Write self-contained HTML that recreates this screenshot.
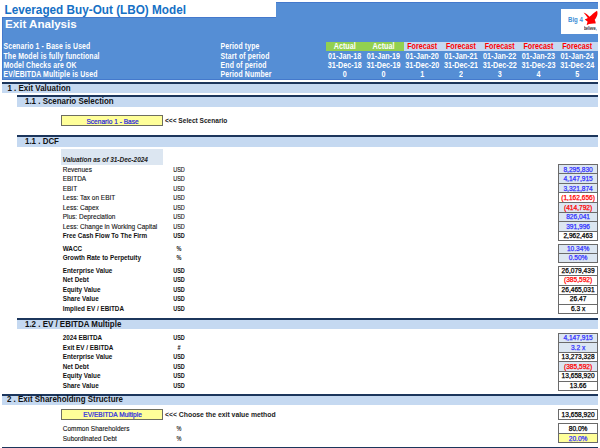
<!DOCTYPE html>
<html><head><meta charset="utf-8"><style>
html,body{margin:0;padding:0;background:#fff;}
#root{position:relative;width:600px;height:448px;overflow:hidden;background:#fff;font-family:"Liberation Sans", sans-serif;}
#root>div,#root>svg{position:absolute;}
</style></head><body><div id="root">
<div style="left:276px;top:2px;width:322px;height:15px;background:#558ed5;box-sizing:border-box;border-top:1px solid #4479cc;"></div>
<div style="left:2px;top:16.5px;width:596px;height:63.2px;background:#558ed5;box-sizing:border-box;border-left:1px solid #4479cc;border-bottom:1px solid #4479cc;"></div>
<div style="left:2px;top:16.5px;width:274px;height:1.0px;background:#4479cc;"></div>
<div style="top:5.38px;font-size:11.75px;color:#1570c5;font-weight:700;font-style:normal;line-height:10px;white-space:nowrap;left:4.5px;transform:scale(1.0,1.06);transform-origin:left 9.07px;">Leveraged Buy-Out (LBO) Model</div>
<div style="top:19.43px;font-size:11.6px;color:#fff;font-weight:700;font-style:normal;line-height:10px;white-space:nowrap;left:5px;">Exit Analysis</div>
<div style="left:560.5px;top:8.7px;width:37.299999999999955px;height:25.3px;background:#fff;"></div>
<div style="top:14.82px;font-size:7.6px;color:#3d8fd6;font-weight:700;font-style:normal;line-height:10px;white-space:nowrap;left:567.9px;transform:scale(0.8,1.0);transform-origin:left 7.63px;">Big 4</div>
<svg style="left:578px;top:6px" width="20" height="26" viewBox="0 0 20 26"><path d="M5.6 6.5 C8 7.5 10 9 11.5 10.8 C13.5 9 16 6.5 19 4.7 C19.9 6.5 19.9 10 16.7 13.8 C17.5 15.5 17.8 16.8 17.6 17.6 C15.5 17.3 13 17.5 11 18 C10 18.6 9.3 19 8.7 19 C9 17.5 9.5 16.5 9.5 15.5 C8.5 15 7.5 14 6.9 13.2 C8 13 9 12.6 9.8 12 C8.5 10 6.8 8 5.6 6.5 Z" fill="#f00"/></svg>
<div style="top:23.86px;font-size:4.6px;color:#222;font-weight:700;font-style:normal;line-height:10px;white-space:nowrap;left:583.8px;transform:scale(0.75,1.0);transform-origin:left 6.59px;">believe,</div>
<div style="top:42.06px;font-size:6.9px;color:#fff;font-weight:700;font-style:normal;line-height:10px;white-space:nowrap;letter-spacing:0.12px;left:3.5px;transform:scale(1.0,1.2);transform-origin:left 7.39px;">Scenario 1 - Base is Used</div>
<div style="top:42.06px;font-size:6.9px;color:#fff;font-weight:700;font-style:normal;line-height:10px;white-space:nowrap;letter-spacing:0.12px;left:220.6px;transform:scale(1.0,1.2);transform-origin:left 7.39px;">Period type</div>
<div style="top:52.06px;font-size:6.9px;color:#fff;font-weight:700;font-style:normal;line-height:10px;white-space:nowrap;letter-spacing:0.12px;left:3.5px;transform:scale(1.0,1.2);transform-origin:left 7.39px;">The Model is fully functional</div>
<div style="top:52.06px;font-size:6.9px;color:#fff;font-weight:700;font-style:normal;line-height:10px;white-space:nowrap;letter-spacing:0.12px;left:220.6px;transform:scale(1.0,1.2);transform-origin:left 7.39px;">Start of period</div>
<div style="top:61.06px;font-size:6.9px;color:#fff;font-weight:700;font-style:normal;line-height:10px;white-space:nowrap;letter-spacing:0.12px;left:3.5px;transform:scale(1.0,1.2);transform-origin:left 7.39px;">Model Checks are OK</div>
<div style="top:61.06px;font-size:6.9px;color:#fff;font-weight:700;font-style:normal;line-height:10px;white-space:nowrap;letter-spacing:0.12px;left:220.6px;transform:scale(1.0,1.2);transform-origin:left 7.39px;">End of period</div>
<div style="top:70.06px;font-size:6.9px;color:#fff;font-weight:700;font-style:normal;line-height:10px;white-space:nowrap;letter-spacing:0.12px;left:3.5px;transform:scale(1.0,1.2);transform-origin:left 7.39px;">EV/EBITDA Multiple is Used</div>
<div style="top:70.06px;font-size:6.9px;color:#fff;font-weight:700;font-style:normal;line-height:10px;white-space:nowrap;letter-spacing:0.12px;left:220.6px;transform:scale(1.0,1.2);transform-origin:left 7.39px;">Period Number</div>
<div style="left:326px;top:42px;width:77.5px;height:9px;background:#92d050;"></div>
<div style="left:403.5px;top:42px;width:194.5px;height:9px;background:#c6d9f1;"></div>
<div style="top:41.96px;font-size:7.2px;color:#fff;font-weight:700;font-style:normal;line-height:10px;white-space:nowrap;left:244.7px;width:200px;text-align:center;transform:scale(1.0,1.15);transform-origin:center 7.49px;">Actual</div>
<div style="top:51.96px;font-size:7.2px;color:#fff;font-weight:700;font-style:normal;line-height:10px;white-space:nowrap;left:244.7px;width:200px;text-align:center;transform:scale(1.0,1.15);transform-origin:center 7.49px;">01-Jan-18</div>
<div style="top:60.96px;font-size:7.2px;color:#fff;font-weight:700;font-style:normal;line-height:10px;white-space:nowrap;left:244.7px;width:200px;text-align:center;transform:scale(1.0,1.15);transform-origin:center 7.49px;">31-Dec-18</div>
<div style="top:69.96px;font-size:7.2px;color:#fff;font-weight:700;font-style:normal;line-height:10px;white-space:nowrap;left:244.7px;width:200px;text-align:center;transform:scale(1.0,1.15);transform-origin:center 7.49px;">0</div>
<div style="top:41.96px;font-size:7.2px;color:#fff;font-weight:700;font-style:normal;line-height:10px;white-space:nowrap;left:283.45px;width:200px;text-align:center;transform:scale(1.0,1.15);transform-origin:center 7.49px;">Actual</div>
<div style="top:51.96px;font-size:7.2px;color:#fff;font-weight:700;font-style:normal;line-height:10px;white-space:nowrap;left:283.45px;width:200px;text-align:center;transform:scale(1.0,1.15);transform-origin:center 7.49px;">01-Jan-19</div>
<div style="top:60.96px;font-size:7.2px;color:#fff;font-weight:700;font-style:normal;line-height:10px;white-space:nowrap;left:283.45px;width:200px;text-align:center;transform:scale(1.0,1.15);transform-origin:center 7.49px;">31-Dec-19</div>
<div style="top:69.96px;font-size:7.2px;color:#fff;font-weight:700;font-style:normal;line-height:10px;white-space:nowrap;left:283.45px;width:200px;text-align:center;transform:scale(1.0,1.15);transform-origin:center 7.49px;">0</div>
<div style="top:41.96px;font-size:7.2px;color:#ff0000;font-weight:700;font-style:normal;line-height:10px;white-space:nowrap;left:322.2px;width:200px;text-align:center;transform:scale(1.0,1.15);transform-origin:center 7.49px;">Forecast</div>
<div style="top:51.96px;font-size:7.2px;color:#fff;font-weight:700;font-style:normal;line-height:10px;white-space:nowrap;left:322.2px;width:200px;text-align:center;transform:scale(1.0,1.15);transform-origin:center 7.49px;">01-Jan-20</div>
<div style="top:60.96px;font-size:7.2px;color:#fff;font-weight:700;font-style:normal;line-height:10px;white-space:nowrap;left:322.2px;width:200px;text-align:center;transform:scale(1.0,1.15);transform-origin:center 7.49px;">31-Dec-20</div>
<div style="top:69.96px;font-size:7.2px;color:#fff;font-weight:700;font-style:normal;line-height:10px;white-space:nowrap;left:322.2px;width:200px;text-align:center;transform:scale(1.0,1.15);transform-origin:center 7.49px;">1</div>
<div style="top:41.96px;font-size:7.2px;color:#ff0000;font-weight:700;font-style:normal;line-height:10px;white-space:nowrap;left:360.95px;width:200px;text-align:center;transform:scale(1.0,1.15);transform-origin:center 7.49px;">Forecast</div>
<div style="top:51.96px;font-size:7.2px;color:#fff;font-weight:700;font-style:normal;line-height:10px;white-space:nowrap;left:360.95px;width:200px;text-align:center;transform:scale(1.0,1.15);transform-origin:center 7.49px;">01-Jan-21</div>
<div style="top:60.96px;font-size:7.2px;color:#fff;font-weight:700;font-style:normal;line-height:10px;white-space:nowrap;left:360.95px;width:200px;text-align:center;transform:scale(1.0,1.15);transform-origin:center 7.49px;">31-Dec-21</div>
<div style="top:69.96px;font-size:7.2px;color:#fff;font-weight:700;font-style:normal;line-height:10px;white-space:nowrap;left:360.95px;width:200px;text-align:center;transform:scale(1.0,1.15);transform-origin:center 7.49px;">2</div>
<div style="top:41.96px;font-size:7.2px;color:#ff0000;font-weight:700;font-style:normal;line-height:10px;white-space:nowrap;left:399.7px;width:200px;text-align:center;transform:scale(1.0,1.15);transform-origin:center 7.49px;">Forecast</div>
<div style="top:51.96px;font-size:7.2px;color:#fff;font-weight:700;font-style:normal;line-height:10px;white-space:nowrap;left:399.7px;width:200px;text-align:center;transform:scale(1.0,1.15);transform-origin:center 7.49px;">01-Jan-22</div>
<div style="top:60.96px;font-size:7.2px;color:#fff;font-weight:700;font-style:normal;line-height:10px;white-space:nowrap;left:399.7px;width:200px;text-align:center;transform:scale(1.0,1.15);transform-origin:center 7.49px;">31-Dec-22</div>
<div style="top:69.96px;font-size:7.2px;color:#fff;font-weight:700;font-style:normal;line-height:10px;white-space:nowrap;left:399.7px;width:200px;text-align:center;transform:scale(1.0,1.15);transform-origin:center 7.49px;">3</div>
<div style="top:41.96px;font-size:7.2px;color:#ff0000;font-weight:700;font-style:normal;line-height:10px;white-space:nowrap;left:438.45000000000005px;width:200px;text-align:center;transform:scale(1.0,1.15);transform-origin:center 7.49px;">Forecast</div>
<div style="top:51.96px;font-size:7.2px;color:#fff;font-weight:700;font-style:normal;line-height:10px;white-space:nowrap;left:438.45000000000005px;width:200px;text-align:center;transform:scale(1.0,1.15);transform-origin:center 7.49px;">01-Jan-23</div>
<div style="top:60.96px;font-size:7.2px;color:#fff;font-weight:700;font-style:normal;line-height:10px;white-space:nowrap;left:438.45000000000005px;width:200px;text-align:center;transform:scale(1.0,1.15);transform-origin:center 7.49px;">31-Dec-23</div>
<div style="top:69.96px;font-size:7.2px;color:#fff;font-weight:700;font-style:normal;line-height:10px;white-space:nowrap;left:438.45000000000005px;width:200px;text-align:center;transform:scale(1.0,1.15);transform-origin:center 7.49px;">4</div>
<div style="top:41.96px;font-size:7.2px;color:#ff0000;font-weight:700;font-style:normal;line-height:10px;white-space:nowrap;left:477.20000000000005px;width:200px;text-align:center;transform:scale(1.0,1.15);transform-origin:center 7.49px;">Forecast</div>
<div style="top:51.96px;font-size:7.2px;color:#fff;font-weight:700;font-style:normal;line-height:10px;white-space:nowrap;left:477.20000000000005px;width:200px;text-align:center;transform:scale(1.0,1.15);transform-origin:center 7.49px;">01-Jan-24</div>
<div style="top:60.96px;font-size:7.2px;color:#fff;font-weight:700;font-style:normal;line-height:10px;white-space:nowrap;left:477.20000000000005px;width:200px;text-align:center;transform:scale(1.0,1.15);transform-origin:center 7.49px;">31-Dec-24</div>
<div style="top:69.96px;font-size:7.2px;color:#fff;font-weight:700;font-style:normal;line-height:10px;white-space:nowrap;left:477.20000000000005px;width:200px;text-align:center;transform:scale(1.0,1.15);transform-origin:center 7.49px;">5</div>
<div style="left:2px;top:82px;width:596px;height:2px;background:#1c365c;"></div>
<div style="left:2px;top:84px;width:596px;height:8.799999999999997px;background:#c5d9f1;"></div>
<div style="top:83.70px;font-size:7.95px;color:#111;font-weight:700;font-style:normal;line-height:10px;white-space:nowrap;left:7.5px;transform:scale(1.0,1.14);transform-origin:left 7.75px;">1 . Exit Valuation</div>
<div style="left:17.2px;top:95.2px;width:580.8px;height:2.0px;background:#1c365c;"></div>
<div style="left:17.2px;top:97.2px;width:580.8px;height:9.5px;background:#c5d9f1;"></div>
<div style="top:96.70px;font-size:7.95px;color:#111;font-weight:700;font-style:normal;line-height:10px;white-space:nowrap;left:25px;transform:scale(1.0,1.14);transform-origin:left 7.75px;">1.1 . Scenario Selection</div>
<div style="left:17.2px;top:134.8px;width:580.8px;height:2.0px;background:#1c365c;"></div>
<div style="left:17.2px;top:136.8px;width:580.8px;height:10.0px;background:#c5d9f1;"></div>
<div style="top:136.70px;font-size:7.95px;color:#111;font-weight:700;font-style:normal;line-height:10px;white-space:nowrap;left:25px;transform:scale(1.0,1.14);transform-origin:left 7.75px;">1.1 . DCF</div>
<div style="left:17.2px;top:317.6px;width:580.8px;height:2.0px;background:#1c365c;"></div>
<div style="left:17.2px;top:319.6px;width:580.8px;height:9.199999999999989px;background:#c5d9f1;"></div>
<div style="top:319.70px;font-size:7.95px;color:#111;font-weight:700;font-style:normal;line-height:10px;white-space:nowrap;left:25px;transform:scale(1.0,1.14);transform-origin:left 7.75px;">1.2 . EV / EBITDA Multiple</div>
<div style="left:2px;top:393.5px;width:596px;height:2.0px;background:#1c365c;"></div>
<div style="left:2px;top:395.5px;width:596px;height:9.5px;background:#c5d9f1;"></div>
<div style="top:394.70px;font-size:7.95px;color:#111;font-weight:700;font-style:normal;line-height:10px;white-space:nowrap;left:7px;transform:scale(1.0,1.14);transform-origin:left 7.75px;">2 . Exit Shareholding Structure</div>
<div style="left:2px;top:446.6px;width:596px;height:1.3999999999999773px;background:#1c365c;"></div>
<div style="left:60.8px;top:115px;width:102.50000000000001px;height:11.299999999999997px;background:#ffff99;box-sizing:border-box;border:1px solid #6e6e60;"></div>
<div style="top:117.17px;font-size:6.58px;color:#2424e0;font-weight:400;font-style:normal;line-height:10px;white-space:nowrap;-webkit-text-stroke:0.2px #2424e0;left:12.599999999999994px;width:200px;text-align:center;transform:scale(1.0,1.14);transform-origin:center 7.28px;">Scenario 1 - Base</div>
<div style="top:116.17px;font-size:6.59px;color:#222;font-weight:700;font-style:normal;line-height:10px;white-space:nowrap;left:165px;">&lt;&lt;&lt; Select Scenario</div>
<div style="left:60.8px;top:408.5px;width:102.50000000000001px;height:11.0px;background:#ffff99;box-sizing:border-box;border:1px solid #6e6e60;"></div>
<div style="top:410.17px;font-size:6.58px;color:#2424e0;font-weight:400;font-style:normal;line-height:10px;white-space:nowrap;-webkit-text-stroke:0.2px #2424e0;left:12.599999999999994px;width:200px;text-align:center;transform:scale(1.0,1.14);transform-origin:center 7.28px;">EV/EBITDA Multiple</div>
<div style="top:410.08px;font-size:6.83px;color:#222;font-weight:700;font-style:normal;line-height:10px;white-space:nowrap;left:165px;">&lt;&lt;&lt; Choose the exit value method</div>
<div style="left:61px;top:149.3px;width:102.4px;height:15.299999999999983px;background:#dce6f1;"></div>
<div style="top:155.21px;font-size:6.47px;color:#222;font-weight:700;font-style:italic;line-height:10px;white-space:nowrap;left:62.6px;">Valuation as of 31-Dec-2024</div>
<div style="left:558.4px;top:164.0px;width:39.39999999999998px;height:9.599999999999994px;background:#dce6f1;"></div>
<div style="top:165.20px;font-size:6.5px;color:#111;font-weight:400;font-style:normal;line-height:10px;white-space:nowrap;-webkit-text-stroke:0.1px #111;left:62.7px;transform:scale(1.0,1.1);transform-origin:left 7.25px;">Revenues</div>
<div style="top:165.27px;font-size:6.3px;color:#111;font-weight:400;font-style:normal;line-height:10px;white-space:nowrap;-webkit-text-stroke:0.1px #111;left:78.6px;width:200px;text-align:center;transform:scale(0.88,1.1);transform-origin:center 7.18px;">USD</div>
<div style="top:165.16px;font-size:6.6px;color:#3333ff;font-weight:400;font-style:normal;line-height:10px;white-space:nowrap;-webkit-text-stroke:0.25px #3333ff;left:478.0999999999999px;width:200px;text-align:center;">8,295,830</div>
<div style="left:558.4px;top:173.6px;width:39.39999999999998px;height:9.599999999999994px;background:#dce6f1;"></div>
<div style="top:174.20px;font-size:6.5px;color:#111;font-weight:400;font-style:normal;line-height:10px;white-space:nowrap;-webkit-text-stroke:0.1px #111;left:62.7px;transform:scale(1.0,1.1);transform-origin:left 7.25px;">EBITDA</div>
<div style="top:174.27px;font-size:6.3px;color:#111;font-weight:400;font-style:normal;line-height:10px;white-space:nowrap;-webkit-text-stroke:0.1px #111;left:78.6px;width:200px;text-align:center;transform:scale(0.88,1.1);transform-origin:center 7.18px;">USD</div>
<div style="top:174.16px;font-size:6.6px;color:#3333ff;font-weight:400;font-style:normal;line-height:10px;white-space:nowrap;-webkit-text-stroke:0.25px #3333ff;left:478.0999999999999px;width:200px;text-align:center;">4,147,915</div>
<div style="left:558.4px;top:183.2px;width:39.39999999999998px;height:9.599999999999994px;background:#dce6f1;"></div>
<div style="top:184.20px;font-size:6.5px;color:#111;font-weight:400;font-style:normal;line-height:10px;white-space:nowrap;-webkit-text-stroke:0.1px #111;left:62.7px;transform:scale(1.0,1.1);transform-origin:left 7.25px;">EBIT</div>
<div style="top:184.27px;font-size:6.3px;color:#111;font-weight:400;font-style:normal;line-height:10px;white-space:nowrap;-webkit-text-stroke:0.1px #111;left:78.6px;width:200px;text-align:center;transform:scale(0.88,1.1);transform-origin:center 7.18px;">USD</div>
<div style="top:184.16px;font-size:6.6px;color:#3333ff;font-weight:400;font-style:normal;line-height:10px;white-space:nowrap;-webkit-text-stroke:0.25px #3333ff;left:478.0999999999999px;width:200px;text-align:center;">3,321,874</div>
<div style="left:558.4px;top:192.8px;width:39.39999999999998px;height:9.599999999999994px;background:#fff;"></div>
<div style="top:193.20px;font-size:6.5px;color:#111;font-weight:400;font-style:normal;line-height:10px;white-space:nowrap;-webkit-text-stroke:0.1px #111;left:62.7px;transform:scale(1.0,1.1);transform-origin:left 7.25px;">Less: Tax on EBIT</div>
<div style="top:193.27px;font-size:6.3px;color:#111;font-weight:400;font-style:normal;line-height:10px;white-space:nowrap;-webkit-text-stroke:0.1px #111;left:78.6px;width:200px;text-align:center;transform:scale(0.88,1.1);transform-origin:center 7.18px;">USD</div>
<div style="top:193.16px;font-size:6.6px;color:#ff0000;font-weight:400;font-style:normal;line-height:10px;white-space:nowrap;-webkit-text-stroke:0.25px #ff0000;left:478.0999999999999px;width:200px;text-align:center;">(1,162,656)</div>
<div style="left:558.4px;top:202.4px;width:39.39999999999998px;height:9.599999999999994px;background:#dce6f1;"></div>
<div style="top:203.20px;font-size:6.5px;color:#111;font-weight:400;font-style:normal;line-height:10px;white-space:nowrap;-webkit-text-stroke:0.1px #111;left:62.7px;transform:scale(1.0,1.1);transform-origin:left 7.25px;">Less: Capex</div>
<div style="top:203.27px;font-size:6.3px;color:#111;font-weight:400;font-style:normal;line-height:10px;white-space:nowrap;-webkit-text-stroke:0.1px #111;left:78.6px;width:200px;text-align:center;transform:scale(0.88,1.1);transform-origin:center 7.18px;">USD</div>
<div style="top:203.16px;font-size:6.6px;color:#ff0000;font-weight:400;font-style:normal;line-height:10px;white-space:nowrap;-webkit-text-stroke:0.25px #ff0000;left:478.0999999999999px;width:200px;text-align:center;">(414,792)</div>
<div style="left:558.4px;top:212.0px;width:39.39999999999998px;height:9.599999999999994px;background:#dce6f1;"></div>
<div style="top:212.20px;font-size:6.5px;color:#111;font-weight:400;font-style:normal;line-height:10px;white-space:nowrap;-webkit-text-stroke:0.1px #111;left:62.7px;transform:scale(1.0,1.1);transform-origin:left 7.25px;">Plus: Depreciation</div>
<div style="top:212.27px;font-size:6.3px;color:#111;font-weight:400;font-style:normal;line-height:10px;white-space:nowrap;-webkit-text-stroke:0.1px #111;left:78.6px;width:200px;text-align:center;transform:scale(0.88,1.1);transform-origin:center 7.18px;">USD</div>
<div style="top:212.16px;font-size:6.6px;color:#3333ff;font-weight:400;font-style:normal;line-height:10px;white-space:nowrap;-webkit-text-stroke:0.25px #3333ff;left:478.0999999999999px;width:200px;text-align:center;">826,041</div>
<div style="left:558.4px;top:221.6px;width:39.39999999999998px;height:9.599999999999994px;background:#dce6f1;"></div>
<div style="top:222.20px;font-size:6.5px;color:#111;font-weight:400;font-style:normal;line-height:10px;white-space:nowrap;-webkit-text-stroke:0.1px #111;left:62.7px;transform:scale(1.0,1.1);transform-origin:left 7.25px;">Less: Change in Working Capital</div>
<div style="top:222.27px;font-size:6.3px;color:#111;font-weight:400;font-style:normal;line-height:10px;white-space:nowrap;-webkit-text-stroke:0.1px #111;left:78.6px;width:200px;text-align:center;transform:scale(0.88,1.1);transform-origin:center 7.18px;">USD</div>
<div style="top:222.16px;font-size:6.6px;color:#3333ff;font-weight:400;font-style:normal;line-height:10px;white-space:nowrap;-webkit-text-stroke:0.25px #3333ff;left:478.0999999999999px;width:200px;text-align:center;">391,996</div>
<div style="left:558.4px;top:231.2px;width:39.39999999999998px;height:9.599999999999994px;background:#fff;"></div>
<div style="top:231.25px;font-size:6.35px;color:#111;font-weight:700;font-style:normal;line-height:10px;white-space:nowrap;left:62.7px;transform:scale(1.0,1.1);transform-origin:left 7.20px;">Free Cash Flow To The Firm</div>
<div style="top:231.27px;font-size:6.3px;color:#111;font-weight:700;font-style:normal;line-height:10px;white-space:nowrap;left:78.6px;width:200px;text-align:center;transform:scale(0.88,1.1);transform-origin:center 7.18px;">USD</div>
<div style="top:231.16px;font-size:6.6px;color:#000;font-weight:400;font-style:normal;line-height:10px;white-space:nowrap;-webkit-text-stroke:0.25px #000;left:478.0999999999999px;width:200px;text-align:center;">2,962,463</div>
<div style="left:558.4px;top:173.1px;width:39.39999999999998px;height:1.0px;background:#6a6a6a;"></div>
<div style="left:558.4px;top:182.7px;width:39.39999999999998px;height:1.0px;background:#6a6a6a;"></div>
<div style="left:558.4px;top:192.3px;width:39.39999999999998px;height:1.0px;background:#6a6a6a;"></div>
<div style="left:558.4px;top:201.9px;width:39.39999999999998px;height:1.0px;background:#6a6a6a;"></div>
<div style="left:558.4px;top:211.5px;width:39.39999999999998px;height:1.0px;background:#6a6a6a;"></div>
<div style="left:558.4px;top:221.1px;width:39.39999999999998px;height:1.0px;background:#6a6a6a;"></div>
<div style="left:558.4px;top:230.7px;width:39.39999999999998px;height:1.0px;background:#6a6a6a;"></div>
<div style="left:558.4px;top:164px;width:39.39999999999998px;height:76.80000000000001px;background:transparent;box-sizing:border-box;border:1px solid #6a6a6a;"></div>
<div style="left:558.4px;top:243.7px;width:39.39999999999998px;height:9.699999999999989px;background:#dce6f1;"></div>
<div style="top:244.25px;font-size:6.35px;color:#111;font-weight:700;font-style:normal;line-height:10px;white-space:nowrap;left:62.7px;transform:scale(1.0,1.1);transform-origin:left 7.20px;">WACC</div>
<div style="top:244.27px;font-size:6.3px;color:#111;font-weight:700;font-style:normal;line-height:10px;white-space:nowrap;left:78.6px;width:200px;text-align:center;transform:scale(0.88,1.1);transform-origin:center 7.18px;">%</div>
<div style="top:244.16px;font-size:6.6px;color:#3333ff;font-weight:400;font-style:normal;line-height:10px;white-space:nowrap;-webkit-text-stroke:0.25px #3333ff;left:478.0999999999999px;width:200px;text-align:center;">10.34%</div>
<div style="left:558.4px;top:253.39999999999998px;width:39.39999999999998px;height:9.699999999999989px;background:#dce6f1;"></div>
<div style="top:253.25px;font-size:6.35px;color:#111;font-weight:700;font-style:normal;line-height:10px;white-space:nowrap;left:62.7px;transform:scale(1.0,1.1);transform-origin:left 7.20px;">Growth Rate to Perpetuity</div>
<div style="top:253.27px;font-size:6.3px;color:#111;font-weight:700;font-style:normal;line-height:10px;white-space:nowrap;left:78.6px;width:200px;text-align:center;transform:scale(0.88,1.1);transform-origin:center 7.18px;">%</div>
<div style="top:253.16px;font-size:6.6px;color:#3333ff;font-weight:400;font-style:normal;line-height:10px;white-space:nowrap;-webkit-text-stroke:0.25px #3333ff;left:478.0999999999999px;width:200px;text-align:center;">0.50%</div>
<div style="left:558.4px;top:252.89999999999998px;width:39.39999999999998px;height:1.0px;background:#6a6a6a;"></div>
<div style="left:558.4px;top:243.7px;width:39.39999999999998px;height:19.399999999999977px;background:transparent;box-sizing:border-box;border:1px solid #6a6a6a;"></div>
<div style="left:558.4px;top:266.3px;width:39.39999999999998px;height:9.560000000000002px;background:#fff;"></div>
<div style="top:266.25px;font-size:6.35px;color:#111;font-weight:700;font-style:normal;line-height:10px;white-space:nowrap;left:62.7px;transform:scale(1.0,1.1);transform-origin:left 7.20px;">Enterprise Value</div>
<div style="top:266.27px;font-size:6.3px;color:#111;font-weight:700;font-style:normal;line-height:10px;white-space:nowrap;left:78.6px;width:200px;text-align:center;transform:scale(0.88,1.1);transform-origin:center 7.18px;">USD</div>
<div style="top:266.16px;font-size:6.6px;color:#000;font-weight:400;font-style:normal;line-height:10px;white-space:nowrap;-webkit-text-stroke:0.25px #000;left:478.0999999999999px;width:200px;text-align:center;">26,079,439</div>
<div style="left:558.4px;top:275.86px;width:39.39999999999998px;height:9.560000000000002px;background:#fff;"></div>
<div style="top:275.25px;font-size:6.35px;color:#111;font-weight:700;font-style:normal;line-height:10px;white-space:nowrap;left:62.7px;transform:scale(1.0,1.1);transform-origin:left 7.20px;">Net Debt</div>
<div style="top:275.27px;font-size:6.3px;color:#111;font-weight:700;font-style:normal;line-height:10px;white-space:nowrap;left:78.6px;width:200px;text-align:center;transform:scale(0.88,1.1);transform-origin:center 7.18px;">USD</div>
<div style="top:275.16px;font-size:6.6px;color:#ff0000;font-weight:400;font-style:normal;line-height:10px;white-space:nowrap;-webkit-text-stroke:0.25px #ff0000;left:478.0999999999999px;width:200px;text-align:center;">(385,592)</div>
<div style="left:558.4px;top:285.42px;width:39.39999999999998px;height:9.560000000000002px;background:#fff;"></div>
<div style="top:285.25px;font-size:6.35px;color:#111;font-weight:700;font-style:normal;line-height:10px;white-space:nowrap;left:62.7px;transform:scale(1.0,1.1);transform-origin:left 7.20px;">Equity Value</div>
<div style="top:285.27px;font-size:6.3px;color:#111;font-weight:700;font-style:normal;line-height:10px;white-space:nowrap;left:78.6px;width:200px;text-align:center;transform:scale(0.88,1.1);transform-origin:center 7.18px;">USD</div>
<div style="top:285.16px;font-size:6.6px;color:#000;font-weight:400;font-style:normal;line-height:10px;white-space:nowrap;-webkit-text-stroke:0.25px #000;left:478.0999999999999px;width:200px;text-align:center;">26,465,031</div>
<div style="left:558.4px;top:294.98px;width:39.39999999999998px;height:9.560000000000002px;background:#fff;"></div>
<div style="top:294.25px;font-size:6.35px;color:#111;font-weight:700;font-style:normal;line-height:10px;white-space:nowrap;left:62.7px;transform:scale(1.0,1.1);transform-origin:left 7.20px;">Share Value</div>
<div style="top:294.27px;font-size:6.3px;color:#111;font-weight:700;font-style:normal;line-height:10px;white-space:nowrap;left:78.6px;width:200px;text-align:center;transform:scale(0.88,1.1);transform-origin:center 7.18px;">USD</div>
<div style="top:294.16px;font-size:6.6px;color:#000;font-weight:400;font-style:normal;line-height:10px;white-space:nowrap;-webkit-text-stroke:0.25px #000;left:478.0999999999999px;width:200px;text-align:center;">26.47</div>
<div style="left:558.4px;top:304.54px;width:39.39999999999998px;height:9.560000000000002px;background:#fff;"></div>
<div style="top:304.25px;font-size:6.35px;color:#111;font-weight:700;font-style:normal;line-height:10px;white-space:nowrap;left:62.7px;transform:scale(1.0,1.1);transform-origin:left 7.20px;">Implied EV / EBITDA</div>
<div style="top:304.27px;font-size:6.3px;color:#111;font-weight:700;font-style:normal;line-height:10px;white-space:nowrap;left:78.6px;width:200px;text-align:center;transform:scale(0.88,1.1);transform-origin:center 7.18px;">USD</div>
<div style="top:304.16px;font-size:6.6px;color:#000;font-weight:400;font-style:normal;line-height:10px;white-space:nowrap;-webkit-text-stroke:0.25px #000;left:478.0999999999999px;width:200px;text-align:center;">6.3 x</div>
<div style="left:558.4px;top:275.36px;width:39.39999999999998px;height:1.0px;background:#6a6a6a;"></div>
<div style="left:558.4px;top:284.92px;width:39.39999999999998px;height:1.0px;background:#6a6a6a;"></div>
<div style="left:558.4px;top:294.48px;width:39.39999999999998px;height:1.0px;background:#6a6a6a;"></div>
<div style="left:558.4px;top:304.04px;width:39.39999999999998px;height:1.0px;background:#6a6a6a;"></div>
<div style="left:558.4px;top:266.3px;width:39.39999999999998px;height:47.80000000000001px;background:transparent;box-sizing:border-box;border:1px solid #6a6a6a;"></div>
<div style="left:558.4px;top:333.1px;width:39.39999999999998px;height:9.579999999999984px;background:#dce6f1;"></div>
<div style="top:333.25px;font-size:6.35px;color:#111;font-weight:700;font-style:normal;line-height:10px;white-space:nowrap;left:62.7px;transform:scale(1.0,1.1);transform-origin:left 7.20px;">2024 EBITDA</div>
<div style="top:333.27px;font-size:6.3px;color:#111;font-weight:700;font-style:normal;line-height:10px;white-space:nowrap;left:78.6px;width:200px;text-align:center;transform:scale(0.88,1.1);transform-origin:center 7.18px;">USD</div>
<div style="top:333.16px;font-size:6.6px;color:#3333ff;font-weight:400;font-style:normal;line-height:10px;white-space:nowrap;-webkit-text-stroke:0.25px #3333ff;left:478.0999999999999px;width:200px;text-align:center;">4,147,915</div>
<div style="left:558.4px;top:342.68px;width:39.39999999999998px;height:9.579999999999984px;background:#dce6f1;"></div>
<div style="top:343.25px;font-size:6.35px;color:#111;font-weight:700;font-style:normal;line-height:10px;white-space:nowrap;left:62.7px;transform:scale(1.0,1.1);transform-origin:left 7.20px;">Exit EV / EBITDA</div>
<div style="top:343.27px;font-size:6.3px;color:#111;font-weight:700;font-style:normal;line-height:10px;white-space:nowrap;left:78.6px;width:200px;text-align:center;transform:scale(0.88,1.1);transform-origin:center 7.18px;">#</div>
<div style="top:343.16px;font-size:6.6px;color:#3333ff;font-weight:400;font-style:normal;line-height:10px;white-space:nowrap;-webkit-text-stroke:0.25px #3333ff;left:478.0999999999999px;width:200px;text-align:center;">3.2 x</div>
<div style="left:558.4px;top:352.26000000000005px;width:39.39999999999998px;height:9.579999999999984px;background:#fff;"></div>
<div style="top:352.25px;font-size:6.35px;color:#111;font-weight:700;font-style:normal;line-height:10px;white-space:nowrap;left:62.7px;transform:scale(1.0,1.1);transform-origin:left 7.20px;">Enterprise Value</div>
<div style="top:352.27px;font-size:6.3px;color:#111;font-weight:700;font-style:normal;line-height:10px;white-space:nowrap;left:78.6px;width:200px;text-align:center;transform:scale(0.88,1.1);transform-origin:center 7.18px;">USD</div>
<div style="top:352.16px;font-size:6.6px;color:#000;font-weight:400;font-style:normal;line-height:10px;white-space:nowrap;-webkit-text-stroke:0.25px #000;left:478.0999999999999px;width:200px;text-align:center;">13,273,328</div>
<div style="left:558.4px;top:361.84000000000003px;width:39.39999999999998px;height:9.579999999999984px;background:#dce6f1;"></div>
<div style="top:362.25px;font-size:6.35px;color:#111;font-weight:700;font-style:normal;line-height:10px;white-space:nowrap;left:62.7px;transform:scale(1.0,1.1);transform-origin:left 7.20px;">Net Debt</div>
<div style="top:362.27px;font-size:6.3px;color:#111;font-weight:700;font-style:normal;line-height:10px;white-space:nowrap;left:78.6px;width:200px;text-align:center;transform:scale(0.88,1.1);transform-origin:center 7.18px;">USD</div>
<div style="top:362.16px;font-size:6.6px;color:#ff0000;font-weight:400;font-style:normal;line-height:10px;white-space:nowrap;-webkit-text-stroke:0.25px #ff0000;left:478.0999999999999px;width:200px;text-align:center;">(385,592)</div>
<div style="left:558.4px;top:371.42px;width:39.39999999999998px;height:9.579999999999984px;background:#fff;"></div>
<div style="top:371.25px;font-size:6.35px;color:#111;font-weight:700;font-style:normal;line-height:10px;white-space:nowrap;left:62.7px;transform:scale(1.0,1.1);transform-origin:left 7.20px;">Equity Value</div>
<div style="top:371.27px;font-size:6.3px;color:#111;font-weight:700;font-style:normal;line-height:10px;white-space:nowrap;left:78.6px;width:200px;text-align:center;transform:scale(0.88,1.1);transform-origin:center 7.18px;">USD</div>
<div style="top:371.16px;font-size:6.6px;color:#000;font-weight:400;font-style:normal;line-height:10px;white-space:nowrap;-webkit-text-stroke:0.25px #000;left:478.0999999999999px;width:200px;text-align:center;">13,658,920</div>
<div style="left:558.4px;top:381.0px;width:39.39999999999998px;height:9.579999999999984px;background:#fff;"></div>
<div style="top:381.25px;font-size:6.35px;color:#111;font-weight:700;font-style:normal;line-height:10px;white-space:nowrap;left:62.7px;transform:scale(1.0,1.1);transform-origin:left 7.20px;">Share Value</div>
<div style="top:381.27px;font-size:6.3px;color:#111;font-weight:700;font-style:normal;line-height:10px;white-space:nowrap;left:78.6px;width:200px;text-align:center;transform:scale(0.88,1.1);transform-origin:center 7.18px;">USD</div>
<div style="top:381.16px;font-size:6.6px;color:#000;font-weight:400;font-style:normal;line-height:10px;white-space:nowrap;-webkit-text-stroke:0.25px #000;left:478.0999999999999px;width:200px;text-align:center;">13.66</div>
<div style="left:558.4px;top:342.18px;width:39.39999999999998px;height:1.0px;background:#6a6a6a;"></div>
<div style="left:558.4px;top:351.76000000000005px;width:39.39999999999998px;height:1.0px;background:#6a6a6a;"></div>
<div style="left:558.4px;top:361.34000000000003px;width:39.39999999999998px;height:1.0px;background:#6a6a6a;"></div>
<div style="left:558.4px;top:370.92px;width:39.39999999999998px;height:1.0px;background:#6a6a6a;"></div>
<div style="left:558.4px;top:380.5px;width:39.39999999999998px;height:1.0px;background:#6a6a6a;"></div>
<div style="left:558.4px;top:333.1px;width:39.39999999999998px;height:57.48000000000002px;background:transparent;box-sizing:border-box;border:1px solid #6a6a6a;"></div>
<div style="left:558.4px;top:408.6px;width:39.39999999999998px;height:11.0px;background:#fff;"></div>
<div style="top:410.20px;font-size:6.5px;color:#111;font-weight:400;font-style:normal;line-height:10px;white-space:nowrap;-webkit-text-stroke:0.1px #111;left:62.7px;transform:scale(1.0,1.1);transform-origin:left 7.25px;"></div>
<div style="top:410.27px;font-size:6.3px;color:#111;font-weight:400;font-style:normal;line-height:10px;white-space:nowrap;-webkit-text-stroke:0.1px #111;left:78.6px;width:200px;text-align:center;transform:scale(0.88,1.1);transform-origin:center 7.18px;"></div>
<div style="top:410.16px;font-size:6.6px;color:#000;font-weight:400;font-style:normal;line-height:10px;white-space:nowrap;-webkit-text-stroke:0.25px #000;left:478.0999999999999px;width:200px;text-align:center;">13,658,920</div>
<div style="left:558.4px;top:408.6px;width:39.39999999999998px;height:11.0px;background:transparent;box-sizing:border-box;border:1px solid #6a6a6a;"></div>
<div style="left:558.4px;top:423.4px;width:39.39999999999998px;height:10.0px;background:#fff;"></div>
<div style="top:424.20px;font-size:6.5px;color:#111;font-weight:400;font-style:normal;line-height:10px;white-space:nowrap;-webkit-text-stroke:0.1px #111;left:62.7px;transform:scale(1.0,1.1);transform-origin:left 7.25px;">Common Shareholders</div>
<div style="top:424.27px;font-size:6.3px;color:#111;font-weight:400;font-style:normal;line-height:10px;white-space:nowrap;-webkit-text-stroke:0.1px #111;left:78.6px;width:200px;text-align:center;transform:scale(0.88,1.1);transform-origin:center 7.18px;">%</div>
<div style="top:424.16px;font-size:6.6px;color:#000;font-weight:400;font-style:normal;line-height:10px;white-space:nowrap;-webkit-text-stroke:0.25px #000;left:478.0999999999999px;width:200px;text-align:center;">80.0%</div>
<div style="left:558.4px;top:433.4px;width:39.39999999999998px;height:10.0px;background:#ffff99;"></div>
<div style="top:434.20px;font-size:6.5px;color:#111;font-weight:400;font-style:normal;line-height:10px;white-space:nowrap;-webkit-text-stroke:0.1px #111;left:62.7px;transform:scale(1.0,1.1);transform-origin:left 7.25px;">Subordinated Debt</div>
<div style="top:434.27px;font-size:6.3px;color:#111;font-weight:400;font-style:normal;line-height:10px;white-space:nowrap;-webkit-text-stroke:0.1px #111;left:78.6px;width:200px;text-align:center;transform:scale(0.88,1.1);transform-origin:center 7.18px;">%</div>
<div style="top:434.16px;font-size:6.6px;color:#3333ff;font-weight:400;font-style:normal;line-height:10px;white-space:nowrap;-webkit-text-stroke:0.25px #3333ff;left:478.0999999999999px;width:200px;text-align:center;">20.0%</div>
<div style="left:558.4px;top:432.9px;width:39.39999999999998px;height:1.0px;background:#6a6a6a;"></div>
<div style="left:558.4px;top:423.4px;width:39.39999999999998px;height:20.0px;background:transparent;box-sizing:border-box;border:1px solid #6a6a6a;"></div>
</div></body></html>
